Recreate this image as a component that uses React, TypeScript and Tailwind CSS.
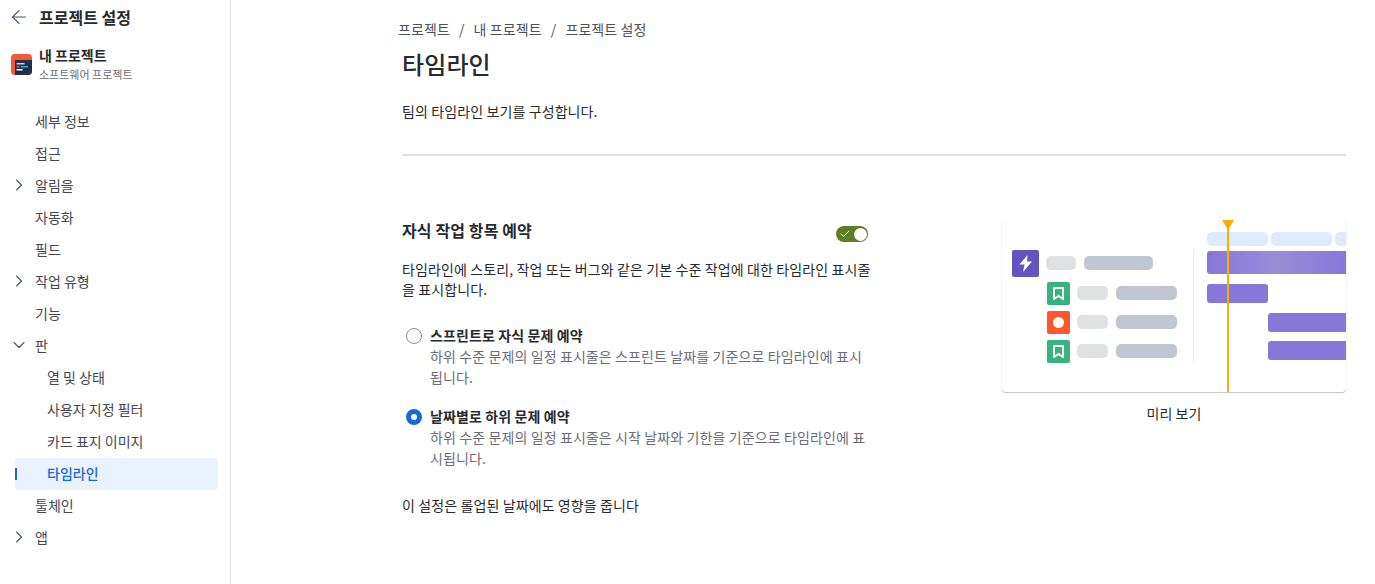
import { ArrowLeft, Check, ChevronDown, ChevronRight } from "lucide-react";

const FONT = "font-['Noto_Sans_CJK_KR','Noto_Sans',sans-serif]";

const NAV = [
	{ label: "세부 정보" },
	{ label: "접근" },
	{ label: "알림을", chevron: "right" },
	{ label: "자동화" },
	{ label: "필드" },
	{ label: "작업 유형", chevron: "right" },
	{ label: "기능" },
	{ label: "판", chevron: "down" },
	{ label: "열 및 상태", child: true },
	{ label: "사용자 지정 필터", child: true },
	{ label: "카드 표지 이미지", child: true },
	{ label: "타임라인", child: true, active: true },
	{ label: "툴체인" },
	{ label: "앱", chevron: "right" },
];

function ProjectLogo() {
	return (
		<svg width="21" height="21" viewBox="0 0 21 21">
			<rect width="21" height="21" rx="4" fill="#f15a36" />
			<path d="M4 6h17v11a4 4 0 0 1-4 4H4z" fill="#1f2f4d" />
			<rect x="5.5" y="9" width="8" height="1.5" fill="#c9d3e0" />
			<rect x="5.5" y="12" width="3" height="1.5" fill="#f15a36" />
			<rect x="10" y="12" width="7" height="1.5" fill="#2bb4c9" />
			<rect x="5.5" y="15" width="6" height="1.5" fill="#ffffff" />
		</svg>
	);
}

function Sidebar() {
	return (
		<aside className="w-[231px] h-[584px] shrink-0 border-r border-[#dcdfe4] bg-white">
			<div className="flex items-center h-9 pl-2 pb-[2px]">
				<ArrowLeft size={22} strokeWidth={1.3} className="text-[#44546f]" />
				<span className="ml-[9px] text-[16px] font-semibold text-[#292a2e]">프로젝트 설정</span>
			</div>
			<div className="flex items-center pl-[11px] mt-[9px] h-[38px]">
				<ProjectLogo />
				<div className="ml-[7px] -mt-[2px]">
					<div className="text-[14px] leading-[20px] font-semibold text-[#292a2e]">내 프로젝트</div>
					<div className="mt-[1px] text-[11px] leading-[16px] text-[#6b6e76]">소프트웨어 프로젝트</div>
				</div>
			</div>
			<nav className="mt-[23px] pl-[15px] pr-[12px]">
				{NAV.map((item) => (
					<div
						key={item.label}
						className={`relative flex items-center h-8 pb-[2px] rounded text-[14px] ${item.active ? "bg-[#e9f2fe] text-[#1868db] font-medium" : "text-[#44474f]"} ${item.child ? "pl-8" : "pl-5"}`}
					>
						{item.active && <span className="absolute left-0 top-[10px] h-3 w-[2px] bg-[#1868db]" />}
						{item.chevron === "right" && <ChevronRight size={20} strokeWidth={1.3} className="absolute left-[-6px] top-[5px] text-[#44546f]" />}
						{item.chevron === "down" && <ChevronDown size={20} strokeWidth={1.3} className="absolute left-[-6px] top-[5px] text-[#44546f]" />}
						{item.label}
					</div>
				))}
			</nav>
		</aside>
	);
}

function Toggle() {
	return (
		<div className="relative w-8 h-4 rounded-full bg-[#5b7f24]">
			<Check size={12} strokeWidth={2} className="absolute left-[3px] top-[2px] text-white" />
			<span className="absolute right-[1.5px] top-[1.5px] w-[13px] h-[13px] rounded-full bg-white" />
		</div>
	);
}

function RadioOption({ checked, title, desc }: { checked?: boolean; title: string; desc: string }) {
	return (
		<div className="flex">
			<div className="w-7 pl-1 pt-[3px] shrink-0">
				{checked ? (
					<div className="w-4 h-4 rounded-full border-[5px] border-[#1868db] bg-white" />
				) : (
					<div className="w-4 h-4 rounded-full border border-[#8c8f97] bg-white" />
				)}
			</div>
			<div className="w-[440px]">
				<div className="text-[14px] leading-[20px] font-semibold text-[#292a2e]">{title}</div>
				<div className="mt-[1px] text-[14px] leading-[21px] text-[#6b6e76]">{desc}</div>
			</div>
		</div>
	);
}

function Bookmark() {
	return (
		<div className="w-[23px] h-[23px] rounded-[2px] bg-[#36b37e] flex items-center justify-center">
			<svg width="11" height="13" viewBox="0 0 11 13">
				<path d="M1 1h9v11L5.5 9 1 12z" fill="none" stroke="#fff" strokeWidth="2" />
			</svg>
		</div>
	);
}

function Pills() {
	return (
		<div className="flex ml-[7px] gap-[8px] -mt-[1px]">
			<span className="w-[31px] h-[14px] rounded-[5px] bg-[#dfe1e3]" />
			<span className="w-[61px] h-[14px] rounded-[5px] bg-[#c1c7d0]" />
		</div>
	);
}

function Preview() {
	return (
		<div className="w-[344px]">
			<div className="relative h-[172px] rounded-[4px] bg-white shadow-[0_1px_1px_rgba(9,30,66,0.25),0_0_1px_rgba(9,30,66,0.1)] overflow-hidden">
				<div className="absolute left-[205px] top-[12px] flex gap-[3px]">
					<span className="w-[61px] h-[14px] rounded-[5px] bg-[#deebff]" />
					<span className="w-[61px] h-[14px] rounded-[5px] bg-[#deebff]" />
					<span className="w-[61px] h-[14px] rounded-[5px] bg-[#deebff]" />
				</div>
				<div className="absolute left-[10px] top-[30px] flex items-center">
					<div className="w-[27px] h-[27px] rounded-[2px] bg-[#6554c0] flex items-center justify-center">
						<svg width="14" height="17" viewBox="0 0 14 17">
							<path d="M8.5 0 0.5 9.5h5L4 17l9-10.5H8z" fill="#fff" />
						</svg>
					</div>
					<div className="flex ml-[7px] gap-[8px] -mt-[1px]">
						<span className="w-[30px] h-[14px] rounded-[5px] bg-[#dfe1e3]" />
						<span className="w-[69px] h-[14px] rounded-[5px] bg-[#c1c7d0]" />
					</div>
				</div>
				<div className="absolute left-[45px] top-[62px] flex flex-col gap-[6px]">
					<div className="flex items-center"><Bookmark /><Pills /></div>
					<div className="flex items-center">
						<div className="w-[23px] h-[23px] rounded-[2px] bg-[#ff5630] flex items-center justify-center">
							<span className="w-[11px] h-[11px] rounded-full bg-white" />
						</div>
						<Pills />
					</div>
					<div className="flex items-center"><Bookmark /><Pills /></div>
				</div>
				<div className="absolute left-[191px] top-[29px] w-px h-[114px] bg-[#ebecf0]" />
				<div className="absolute left-[205px] top-[31px] right-0 h-[23px] rounded-l-[3px] bg-gradient-to-r from-[#8777d9] via-[#998dd9] to-[#8777d9]" />
				<div className="absolute left-[205px] top-[64px] w-[61px] h-[19px] rounded-[3px] bg-[#8777d9]" />
				<div className="absolute left-[266px] top-[93px] right-0 h-[19px] rounded-l-[3px] bg-[#8777d9]" />
				<div className="absolute left-[266px] top-[121px] right-0 h-[19px] rounded-l-[3px] bg-[#8777d9]" />
				<div className="absolute left-[225px] top-0 bottom-0 w-[2px] bg-[#ffab00]" />
				<div className="absolute left-[220px] top-0 w-0 h-0 border-l-[6px] border-r-[6px] border-t-[10px] border-l-transparent border-r-transparent border-t-[#ffab00]" />
			</div>
			<div className="mt-[11px] text-center text-[14px] leading-[20px] text-[#292a2e]">미리 보기</div>
		</div>
	);
}

export default function App() {
	return (
		<div className={`flex w-[1375px] h-[584px] overflow-hidden bg-white ${FONT}`}>
			<Sidebar />
			<main className="ml-[167px] w-[948px] pt-[19px] tracking-[0.11px]">
				<div className="flex text-[14px] leading-[20px] text-[#505258]">
					<span>프로젝트</span>
					<span className="mx-[9px]">/</span>
					<span>내 프로젝트</span>
					<span className="mx-[9px]">/</span>
					<span>프로젝트 설정</span>
				</div>
				<h1 className="ml-1 mt-[9px] text-[24px] leading-[32px] font-medium text-[#292a2e]">타임라인</h1>
				<p className="ml-1 mt-[21px] text-[14px] leading-[20px] text-[#292a2e]">팀의 타임라인 보기를 구성합니다.</p>
				<div className="ml-1 mt-[33px] h-[2px] bg-[#dfe1e6]" />
				<div className="ml-1 mt-[63px] flex">
					<div className="w-[486px]">
						<div className="flex items-start justify-between w-[466px]">
							<h2 className="text-[16px] leading-[22px] font-semibold text-[#292a2e]">자식 작업 항목 예약</h2>
							<div className="mt-[7px]"><Toggle /></div>
						</div>
						<p className="mt-[17px] w-[472px] text-[14px] leading-[20px] text-[#292a2e]">
							타임라인에 스토리, 작업 또는 버그와 같은 기본 수준 작업에 대한 타임라인 표시줄을 표시합니다.
						</p>
						<div className="mt-[26px] flex flex-col gap-[18px]">
							<RadioOption title="스프린트로 자식 문제 예약" desc="하위 수준 문제의 일정 표시줄은 스프린트 날짜를 기준으로 타임라인에 표시됩니다." />
							<RadioOption checked title="날짜별로 하위 문제 예약" desc="하위 수준 문제의 일정 표시줄은 시작 날짜와 기한을 기준으로 타임라인에 표시됩니다." />
						</div>
						<p className="mt-[26px] text-[14px] leading-[20px] text-[#292a2e]">이 설정은 롤업된 날짜에도 영향을 줍니다</p>
					</div>
					<div className="ml-[114px] mt-[1px]"><Preview /></div>
				</div>
			</main>
		</div>
	);
}
